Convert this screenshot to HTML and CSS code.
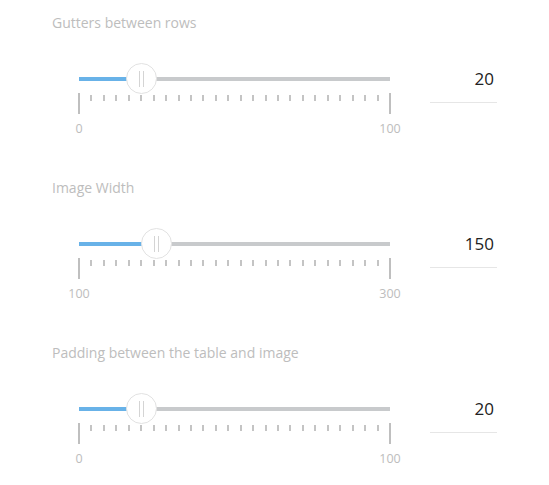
FILE: index.html
```html
<!DOCTYPE html>
<html lang="en">
<head>
  <meta charset="UTF-8" />
  <meta name="viewport" content="width=device-width, initial-scale=1.0"/>
  <title>Layout settings</title>
  <link rel="stylesheet" href="styles.css">
</head>
<body>

  <!-- Gutters -->
  <div class="field">
    <div class="field-label">Gutters between rows</div>
    <div class="field-row">
      <div class="slider">
        <div class="track">
          <div class="track-fill" style="width: 20%"></div>
          <div class="knob" style="left: 20%"><span></span><span></span></div>
        </div>
        <div class="ticks">
          <i class="big"></i><i></i><i></i><i></i><i></i><i></i><i></i><i></i><i></i><i></i><i></i><i></i><i></i><i></i><i></i><i></i><i></i><i></i><i></i><i></i><i></i><i></i><i></i><i></i><i></i><i class="big"></i>
        </div>
        <div class="scale"><span>0</span><span>100</span></div>
      </div>
      <input class="value-input" type="text" value="20">
    </div>
  </div>

  <!-- Image width -->
  <div class="field">
    <div class="field-label">Image Width</div>
    <div class="field-row">
      <div class="slider">
        <div class="track">
          <div class="track-fill" style="width: 25%"></div>
          <div class="knob" style="left: 25%"><span></span><span></span></div>
        </div>
        <div class="ticks">
          <i class="big"></i><i></i><i></i><i></i><i></i><i></i><i></i><i></i><i></i><i></i><i></i><i></i><i></i><i></i><i></i><i></i><i></i><i></i><i></i><i></i><i></i><i></i><i></i><i></i><i></i><i class="big"></i>
        </div>
        <div class="scale"><span>100</span><span>300</span></div>
      </div>
      <input class="value-input" type="text" value="150">
    </div>
  </div>

  <!-- Padding -->
  <div class="field">
    <div class="field-label">Padding between the table and image</div>
    <div class="field-row">
      <div class="slider">
        <div class="track">
          <div class="track-fill" style="width: 20%"></div>
          <div class="knob" style="left: 20%"><span></span><span></span></div>
        </div>
        <div class="ticks">
          <i class="big"></i><i></i><i></i><i></i><i></i><i></i><i></i><i></i><i></i><i></i><i></i><i></i><i></i><i></i><i></i><i></i><i></i><i></i><i></i><i></i><i></i><i></i><i></i><i></i><i></i><i class="big"></i>
        </div>
        <div class="scale"><span>0</span><span>100</span></div>
      </div>
      <input class="value-input" type="text" value="20">
    </div>
  </div>

</body>
</html>
```

FILE: styles.css
```css
:root {
  --label: #bdbdbd;
  --tick: #c4c4c4;
  --track: #c8cacc;
  --fill: #68b2e8;
  --line: #e6e6e6;
}

* {
  box-sizing: border-box;
}

body {
  margin: 0;
  padding: 13px 0 0 52px;
  background: #fff;
  font-family: 'Open Sans', 'Noto Sans', sans-serif;
}

.field {
  margin-bottom: 42px;
}

.field-label {
  font-size: 14px;
  line-height: 20px;
  color: var(--label);
}

.field-row {
  display: flex;
  align-items: flex-start;
  gap: 40px;
  margin: 30px 0 0 27px;
}

.slider {
  width: 311px;
}

.track {
  position: relative;
  height: 31px;
  display: flex;
  align-items: center;
}

.track::before {
  content: "";
  position: absolute;
  left: 0;
  right: 0;
  top: 14px;
  height: 4px;
  background: var(--track);
}

.track-fill {
  position: relative;
  height: 4px;
  margin-top: 1px;
  background: var(--fill);
}

.knob {
  position: absolute;
  top: 0;
  width: 31px;
  height: 31px;
  margin-left: -15.5px;
  border: 1px solid #e2e2e2;
  border-radius: 50%;
  background: #fff;
  display: flex;
  justify-content: center;
  align-items: center;
  gap: 3px;
}

.knob span {
  width: 1px;
  height: 16px;
  background: #d4d4d4;
}

.ticks {
  display: flex;
  justify-content: space-between;
  align-items: flex-start;
  margin-top: -1px;
  margin-right: -1px;
  margin-left: -1px;
}

.ticks i {
  width: 2px;
  height: 6px;
  margin-top: 2px;
  background: var(--tick);
}

.ticks i.big {
  height: 21px;
  margin-top: 0;
  background: #bfbfbf;
}

.scale {
  display: flex;
  justify-content: space-between;
  margin: 8px -12px 0;
  font-size: 12.5px;
  line-height: 14px;
  color: var(--label);
}

.scale span {
  width: 24px;
  text-align: center;
}

.value-input {
  width: 67px;
  height: 40px;
  padding: 6px 3px 14px 0;
  border: none;
  border-bottom: 1px solid var(--line);
  font-family: 'Open Sans', sans-serif;
  font-size: 17px;
  line-height: 20px;
  color: #222;
  text-align: right;
  outline: none;
}
```
